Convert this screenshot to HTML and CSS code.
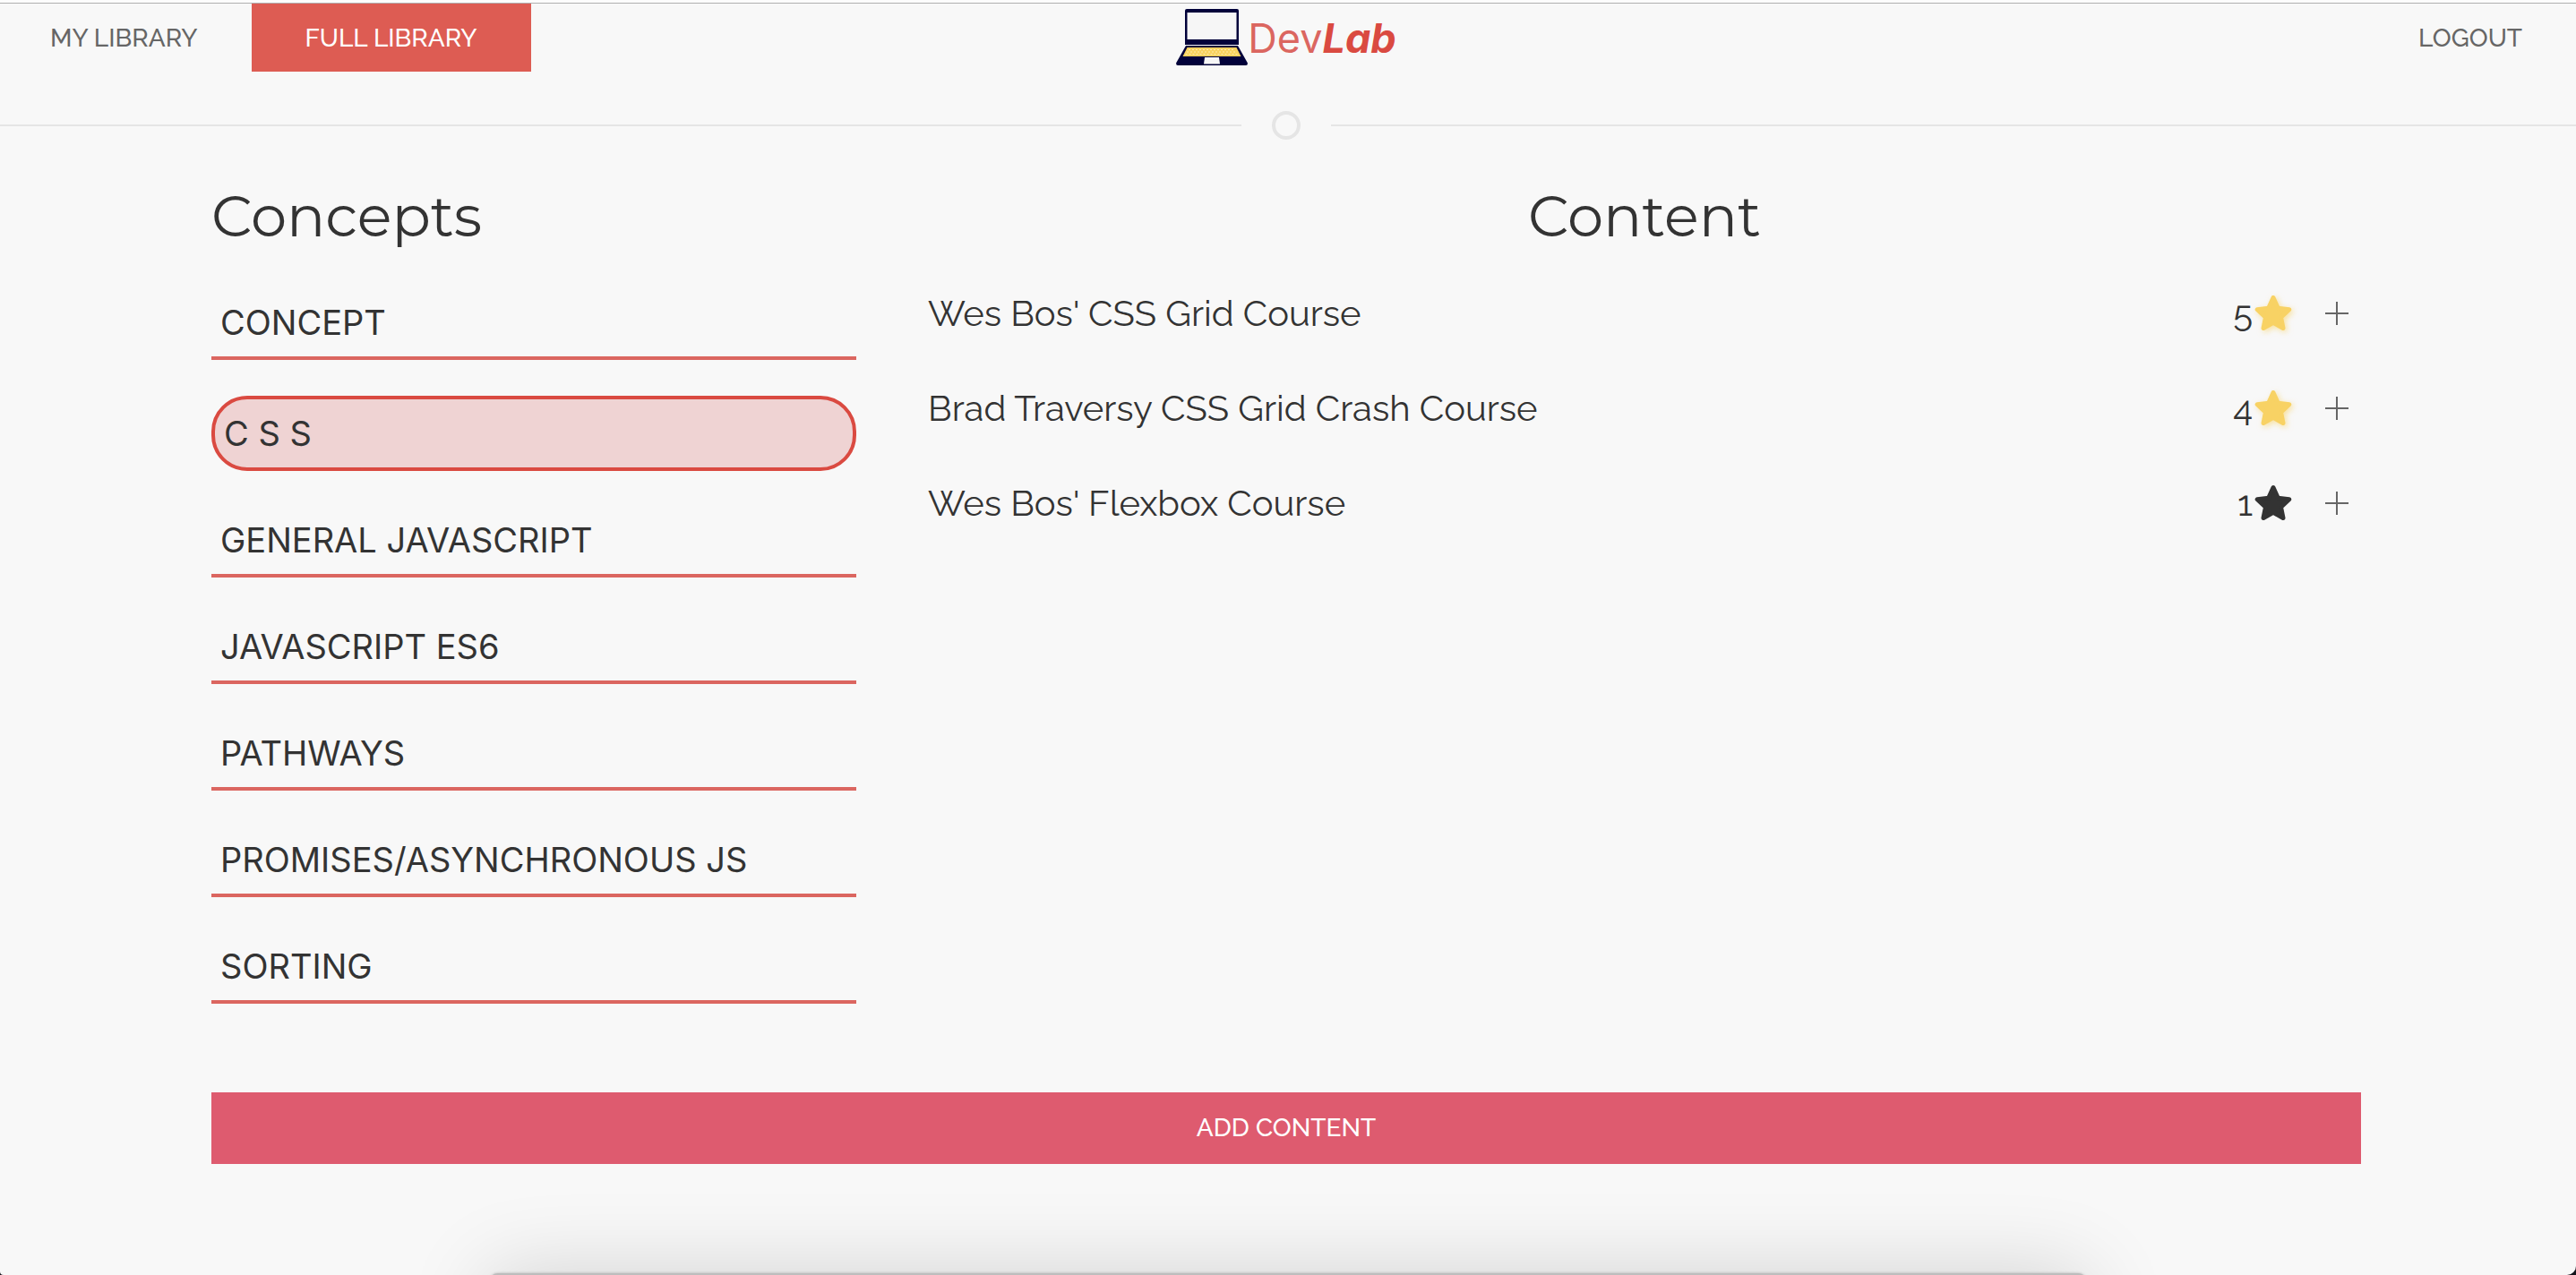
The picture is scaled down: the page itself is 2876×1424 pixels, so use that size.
FILE: index.html
```html
<!DOCTYPE html>
<html lang="en">
<head>
<meta charset="utf-8">
<title>DevLab</title>
<link rel="stylesheet" href="styles.css">
</head>
<body>
<svg class="sprite" aria-hidden="true">
  <symbol id="star" viewBox="0 0 42 42">
    <path d="M21 3.500 L26.300 15.200 L38.800 16.700 L29.500 25.300 L32 37.500 L21 31.300 L10 37.500 L12.500 25.300 L3.200 16.700 L15.700 15.200 Z" fill="currentColor" stroke="currentColor" stroke-width="5" stroke-linejoin="round"/>
  </symbol>
  <symbol id="plus" viewBox="0 0 26 26">
    <path d="M12 0h2v26h-2zM0 12h26v2H0z" fill="currentColor"/>
  </symbol>
</svg>
<header class="navbar">
  <nav class="nav-left">
    <a class="nav-link" href="#my">MY LIBRARY</a>
    <a class="nav-link active" href="#full">FULL LIBRARY</a>
  </nav>
  <a class="logo" href="#home">
    <svg class="laptop" viewBox="0 0 80 66" aria-hidden="true">
      <path d="M12 0h56q2 0 2 2v38H10V2q0-2 2-2z" fill="#02023a"/>
      <path d="M12.500 4h55v30h-55z" fill="#f6f6f6"/>
      <path d="M11 41h58L80 60.500q0 2.500-2 2.500H2q-2 0-2-2.500z" fill="#02023a"/>
      <path d="M12.500 43h55l5 10h-65z" fill="#f8d25e"/>
      <path d="M14 45.500h52M12 48h56M10.500 50.500h59" stroke="#fdebb0" stroke-width="1" stroke-dasharray="2 2"/>
      <path d="M32 54h16l1 7.500H31z" fill="#f6f6f6"/>
    </svg>
    <span class="dev">Dev</span><b class="lab">Lab</b>
  </a>
  <nav class="nav-right">
    <a class="nav-link" href="#logout">LOGOUT</a>
  </nav>
</header>
<div class="divider"><span class="ring"></span></div>
<main class="container">
  <section class="concepts">
    <h1>Concepts</h1>
    <ul class="concept-list">
      <li><button class="concept" type="button">CONCEPT</button></li>
      <li><button class="concept selected" type="button">C S S</button></li>
      <li><button class="concept" type="button">GENERAL JAVASCRIPT</button></li>
      <li><button class="concept" type="button">JAVASCRIPT ES6</button></li>
      <li><button class="concept" type="button">PATHWAYS</button></li>
      <li><button class="concept" type="button">PROMISES/ASYNCHRONOUS JS</button></li>
      <li><button class="concept" type="button">SORTING</button></li>
    </ul>
  </section>
  <section class="content">
    <h1>Content</h1>
    <ul class="course-list">
      <li class="course"><a href="#c1">Wes Bos' CSS Grid Course</a><span class="votes">5</span><button class="star rated" type="button" aria-label="Rate"><svg><use href="#star"/></svg></button><button class="plus" type="button" aria-label="Add"><svg><use href="#plus"/></svg></button></li>
      <li class="course"><a href="#c2">Brad Traversy CSS Grid Crash Course</a><span class="votes">4</span><button class="star rated" type="button" aria-label="Rate"><svg><use href="#star"/></svg></button><button class="plus" type="button" aria-label="Add"><svg><use href="#plus"/></svg></button></li>
      <li class="course"><a href="#c3">Wes Bos' Flexbox Course</a><span class="votes">1</span><button class="star" type="button" aria-label="Rate"><svg><use href="#star"/></svg></button><button class="plus" type="button" aria-label="Add"><svg><use href="#plus"/></svg></button></li>
    </ul>
  </section>
  <button class="add" type="button">ADD CONTENT</button>
</main>
<footer class="foot"><div class="foot-shadow"></div></footer>
</body>
</html>
```
FILE: styles.css
```css
* { box-sizing: border-box; }
html { background: #14141c; }
body {
  margin: 0;
  min-height: 100vh;
  background: #f8f8f8;
  color: #333;
  font-family: Raleway, Lato, sans-serif;
  font-size: 40px;
  border-top: 3px solid #fdfdfd;
  border-radius: 0 0 10px 4px;
}
a { color: inherit; text-decoration: none; }
button { font: inherit; color: inherit; border: 0; padding: 0; background: none; }
ul { list-style: none; margin: 0; padding: 0; }
.sprite { position: absolute; width: 0; height: 0; }

.navbar {
  display: grid;
  grid-template-columns: 1fr auto 1fr;
  border-top: 1px solid #b0b0b0;
}
.nav-left, .nav-right { display: flex; align-items: flex-start; }
.nav-right { justify-content: flex-end; }
.nav-link {
  padding: 2px 60px 0;
  font-size: 28px;
  font-weight: 500;
  line-height: 74px;
  color: #666;
}
.nav-left .nav-link:first-child { padding-left: 56px; }
.nav-link.active { background: #dd5c53; color: #fff; }
.logo {
  display: flex;
  align-items: center;
  height: 78px;
  margin-right: 4px;
  font-family: Inter, sans-serif;
  font-size: 45px;
  line-height: 76px;
}
.laptop { width: 80px; height: 66px; }
.dev { color: #db6660; }
.lab { color: #da4a41; font-style: italic; }

.divider {
  display: flex;
  align-items: center;
  gap: 34px;
  margin-top: 42px;
}
.divider::before, .divider::after {
  content: "";
  height: 2px;
  background: #e5e5e5;
}
.divider::before { width: calc(50% - 52px); }
.divider::after { flex: 1; }
.ring {
  width: 32px;
  height: 32px;
  border: 4px solid #e5e5e5;
  border-radius: 50%;
}

.container {
  display: grid;
  grid-template-columns: 720px 1fr;
  column-gap: 80px;
  width: 2404px;
  max-width: 100%;
  margin: 40px auto 0;
  padding-right: 4px;
}
h1 {
  margin: 0;
  font-family: Montserrat, Inter, sans-serif;
  font-size: 64px;
  font-weight: 400;
  line-height: 90px;
}
.content h1 { text-align: center; }
.concept-list {
  display: grid;
  gap: 40px;
  margin-top: 37px;
}
.concept {
  display: block;
  width: 100%;
  padding: 12px 10px 13px;
  border-bottom: 4px solid #db6660;
  font-family: Inter, sans-serif;
  font-size: 38px;
  line-height: 50px;
  text-align: left;
}
.concept.selected {
  padding-top: 13px;
  border: 4px solid #da4a41;
  border-radius: 40px;
  background: #efd3d3;
}
.course-list { margin-top: 11px; }
.course {
  display: flex;
  align-items: center;
  line-height: 106px;
}
.course a { flex: 1; }
.star { width: 42px; margin: 0 37px 0 2px; }
.star svg { display: block; width: 42px; height: 42px; }
.rated { color: #f8d264; filter: drop-shadow(2px 2px 3px #f8d26499); }
.plus { color: #666; margin-right: 14px; }
.plus svg { display: block; width: 26px; height: 26px; }
.add {
  grid-column: 1 / -1;
  margin-top: 99px;
  background: #de5b6f;
  color: #fff;
  font-size: 28px;
  font-weight: 500;
  line-height: 80px;
}

/* Soft shadow cast over the foot of the page */
.foot {
  position: relative;
  height: 124px;
  overflow: hidden;
}
.foot-shadow {
  position: absolute;
  top: calc(100% - 2px);
  left: 19%;
  right: 19%;
  height: 160px;
  border-radius: 10px;
  background: #bdbdbd;
  box-shadow: 0 0 3px #00000040, 0 0 94px #00000028;
}
```
